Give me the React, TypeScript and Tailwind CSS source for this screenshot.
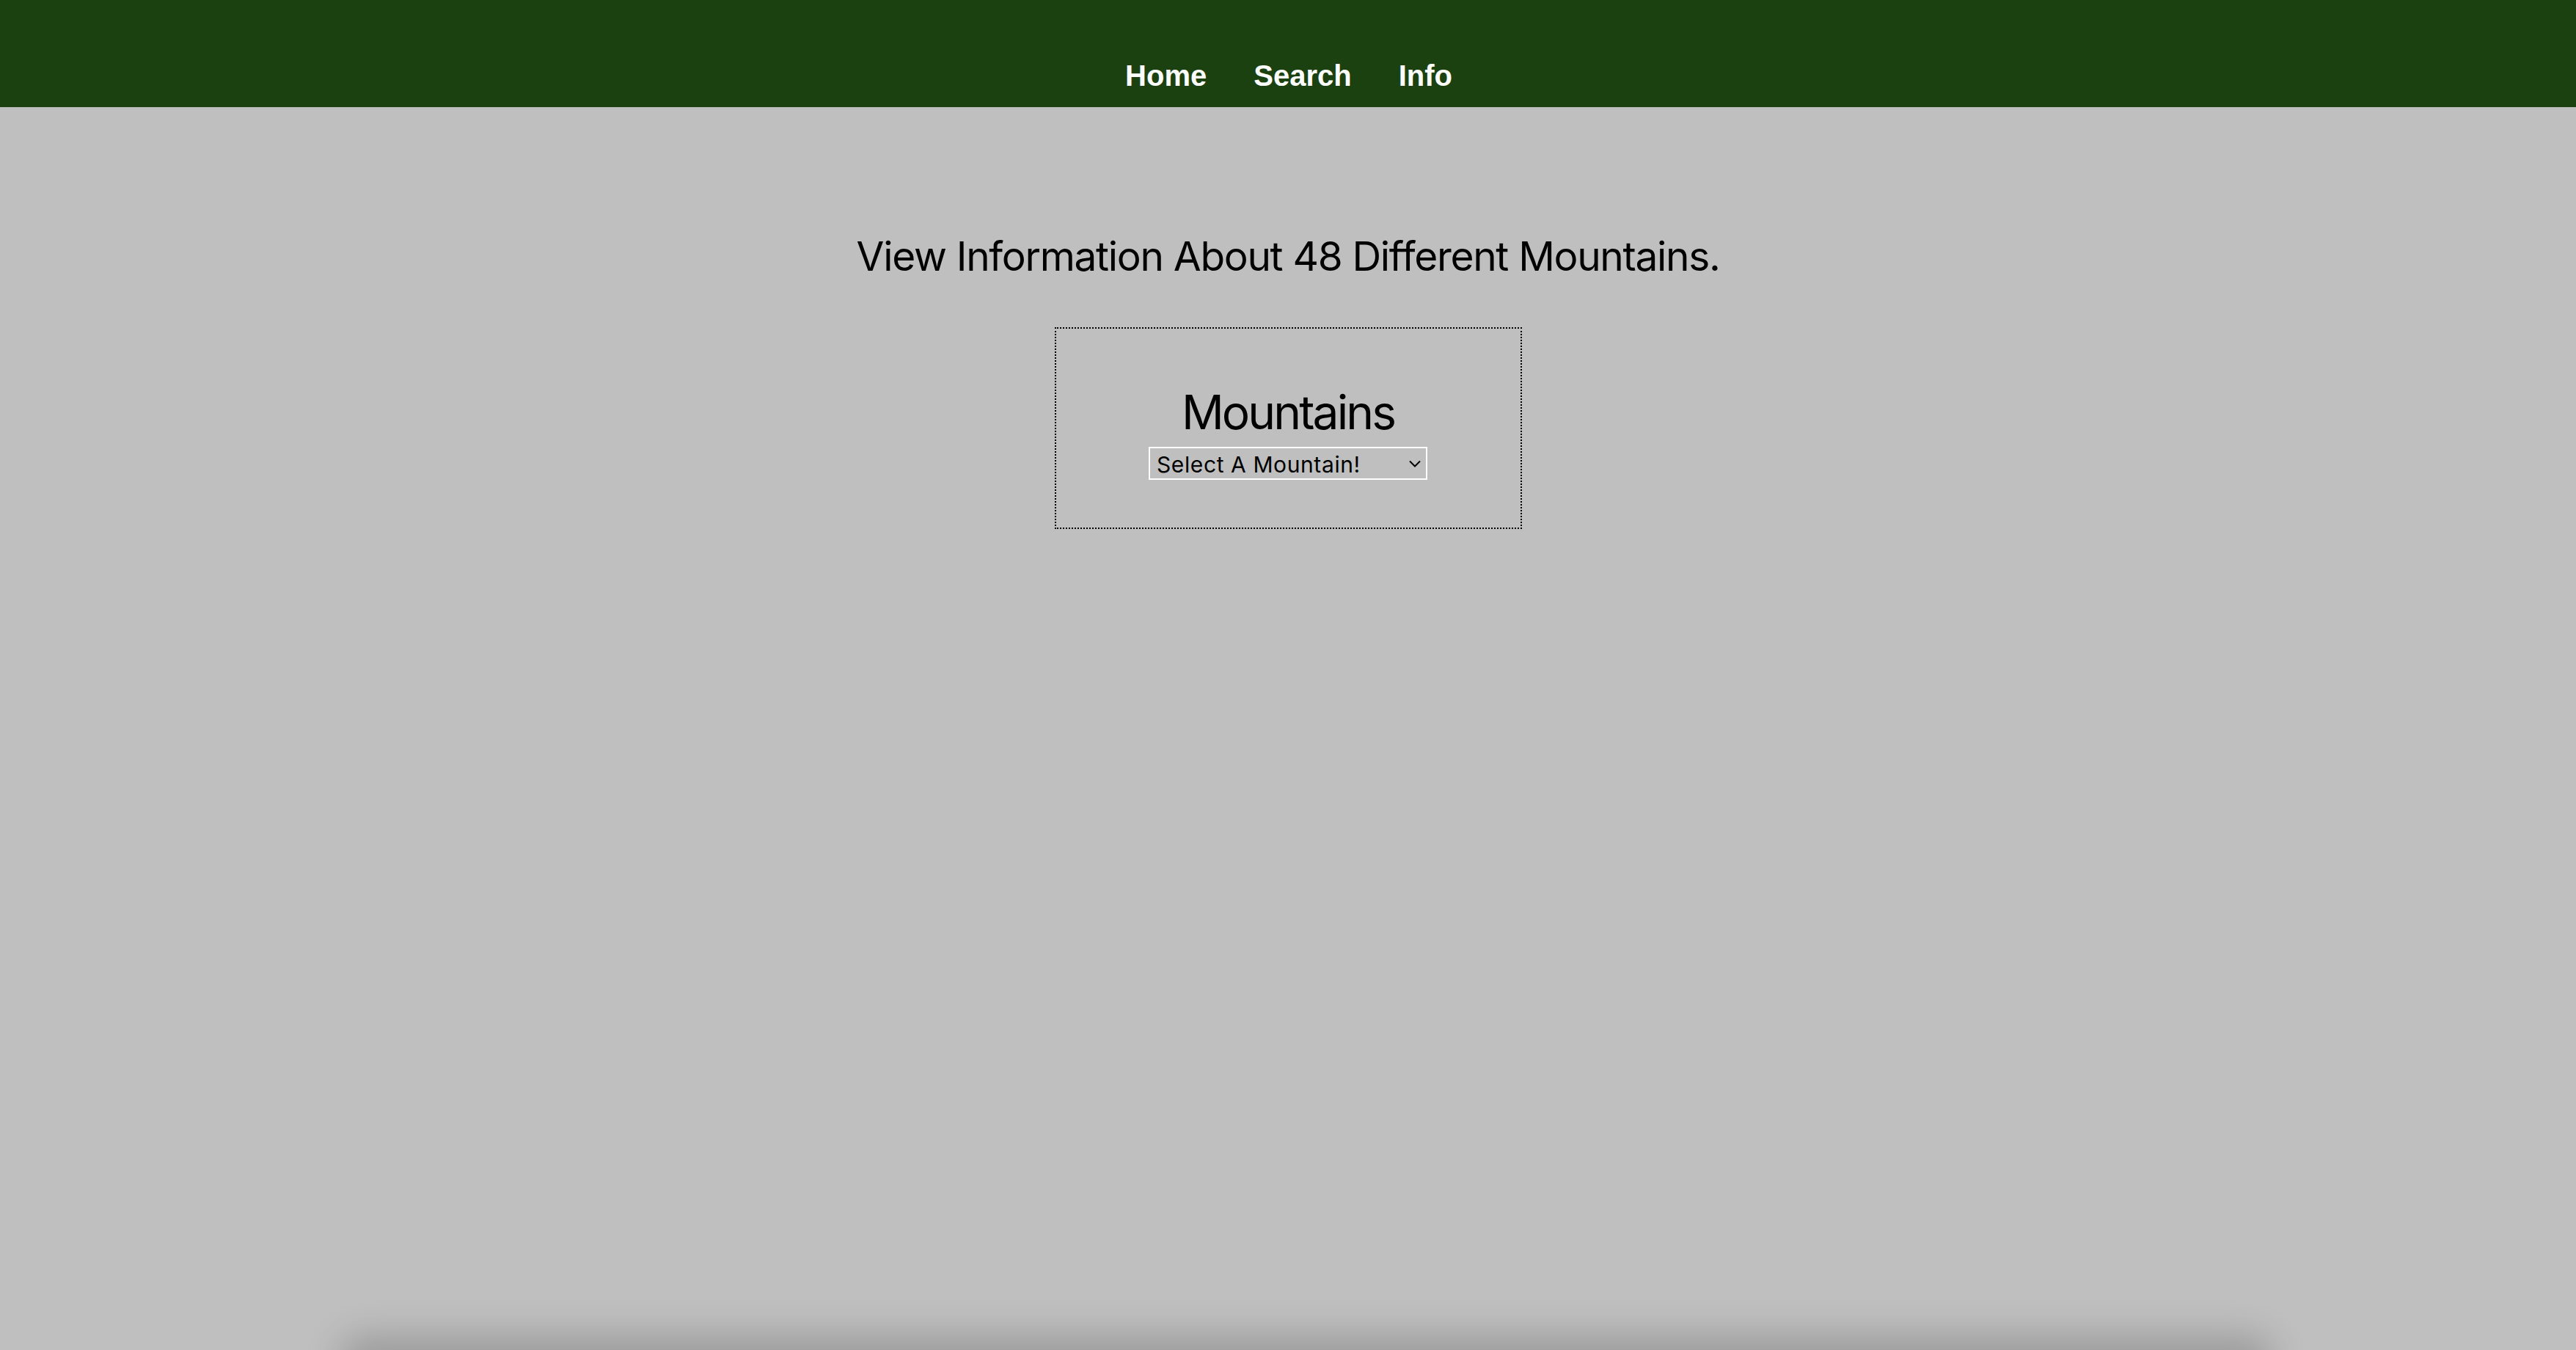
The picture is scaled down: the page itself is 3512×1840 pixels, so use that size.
import React from 'react';

const navItems = ['Home', 'Search', 'Info'];

const App: React.FC = () => {
  const [mountain, setMountain] = React.useState('');

  return (
    <div className="relative h-screen overflow-hidden bg-[#bfbfbf]">
      {/* Top nav */}
      <header className="h-[146px] bg-[#1c4111] flex items-end justify-center pb-[20px]">
        <nav className="flex gap-[64px] pl-[2px]">
          {navItems.map((item) => (
            <a
              key={item}
              href="#"
              className="text-white font-bold text-[40px] leading-[46px] font-['Liberation_Sans',Arial,sans-serif]"
            >
              {item}
            </a>
          ))}
        </nav>
      </header>

      <main className="flex flex-col items-center font-['Inter','Noto_Sans',sans-serif] text-black">
        <h1 className="mt-[171px] text-[55px] leading-[64px] font-normal tracking-[-0.024em]">
          View Information About 48 Different Mountains.
        </h1>

        {/* Mountain picker */}
        <div className="mt-[65px] w-[637px] border-2 border-dotted border-black flex flex-col items-center pt-[77px] pb-[65px]">
          <h2 className="text-[64px] leading-[74px] font-normal tracking-[-0.045em]">Mountains</h2>
          <div className="relative mt-[10px]">
            <select
              value={mountain}
              onChange={(e) => setMountain(e.target.value)}
              className="appearance-none w-[380px] h-[45px] border-2 border-white bg-transparent pl-[9px] text-[30px] tracking-[0.02em] text-black outline-none"
            >
              <option value="">Select A Mountain!</option>
            </select>
            <svg
              className="pointer-events-none absolute right-[9px] top-[18px]"
              width="16"
              height="10"
              viewBox="0 0 16 10"
              fill="none"
            >
              <path d="M1 1.5 L8 8.5 L15 1.5" stroke="#000" strokeWidth="2" />
            </svg>
          </div>
        </div>
      </main>

      {/* soft shadow along the bottom edge */}
      <div className="pointer-events-none absolute bottom-[-30px] left-[480px] right-[430px] h-[30px] rounded-full shadow-[0_0_50px_18px_rgba(0,0,0,0.2)]" />
    </div>
  );
};

export default App;
